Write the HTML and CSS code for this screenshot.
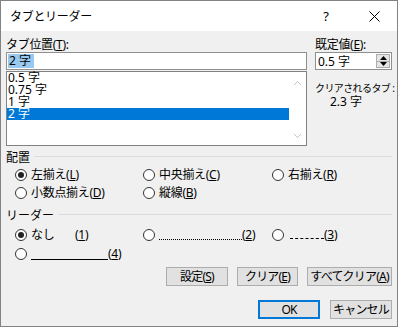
FILE: index.html
```html
<!DOCTYPE html>
<html lang="ja">
<head>
    <meta charset="UTF-8">
    <title>タブとリーダー</title>
    <link rel="stylesheet" href="styles.css">
</head>
<body>
    <div class="dialog">
        <div class="titlebar">
            <span class="title">タブとリーダー</span>
            <span class="tb-btn help">?</span>
            <span class="tb-btn close">
                <svg width="11" height="11" viewBox="0 0 11 11"><path d="M0.5 0.5 L10.5 10.5 M10.5 0.5 L0.5 10.5" stroke="#000" stroke-width="1" fill="none"/></svg>
            </span>
        </div>

        <div class="content">
            <div class="top">
                <div class="left">
                    <div class="label">タブ位置(<u>T</u>):</div>
                    <div class="field"><span class="field-sel">2 字</span></div>
                    <div class="listbox">
                        <ul class="items">
                            <li>0.5 字</li>
                            <li>0.75 字</li>
                            <li>1 字</li>
                            <li class="selected">2 字</li>
                        </ul>
                        <div class="scrollbar">
                            <svg width="9" height="6" viewBox="0 0 9 6"><path d="M1 5 L4.5 1.5 L8 5" stroke="#c2c2c2" fill="none"/></svg>
                            <svg width="9" height="6" viewBox="0 0 9 6"><path d="M1 1 L4.5 4.5 L8 1" stroke="#c2c2c2" fill="none"/></svg>
                        </div>
                    </div>
                </div>
                <div class="right">
                    <div class="label">既定値(<u>E</u>):</div>
                    <div class="spin">
                        <span>0.5 字</span>
                        <div class="spin-btns">
                            <span class="spin-up"><svg width="7" height="4" viewBox="0 0 7 4"><path d="M0 4 L3.5 0 L7 4 Z" fill="#000"/></svg></span>
                            <span class="spin-down"><svg width="7" height="4" viewBox="0 0 7 4"><path d="M0 0 L3.5 4 L7 0 Z" fill="#000"/></svg></span>
                        </div>
                    </div>
                    <div class="info cleared">クリアされるタブ :</div>
                    <div class="info value">2.3 字</div>
                </div>
            </div>

            <div class="group-title"><span>配置</span></div>
            <div class="options align">
                <label class="radio"><span class="dot checked"></span>左揃え(<u>L</u>)</label>
                <label class="radio"><span class="dot"></span>中央揃え(<u>C</u>)</label>
                <label class="radio"><span class="dot"></span>右揃え(<u>R</u>)</label>
                <label class="radio"><span class="dot"></span>小数点揃え(<u>D</u>)</label>
                <label class="radio"><span class="dot"></span>縦線(<u>B</u>)</label>
            </div>

            <div class="group-title leader-title"><span>リーダー</span></div>
            <div class="options leader">
                <label class="radio"><span class="dot checked"></span><span class="none">なし</span>(<u>1</u>)</label>
                <label class="radio"><span class="dot"></span><span class="dots"></span>(<u>2</u>)</label>
                <label class="radio"><span class="dot"></span><span class="dashes"></span>(<u>3</u>)</label>
                <label class="radio"><span class="dot"></span><span class="solid"></span>(<u>4</u>)</label>
            </div>

            <div class="buttons">
                <button class="btn w62">設定(<u>S</u>)</button>
                <button class="btn w61">クリア(<u>E</u>)</button>
                <button class="btn w85">すべてクリア(<u>A</u>)</button>
            </div>
            <div class="buttons footer">
                <button class="btn w62 default">OK</button>
                <button class="btn w62">キャンセル</button>
            </div>
        </div>
    </div>
</body>
</html>
```

FILE: styles.css
```css
body {
    margin: 0;
    padding: 0;
    font-family: "Noto Sans", "Noto Sans CJK JP", sans-serif;
    font-size: 12px;
    color: #000;
}

.dialog {
    width: 398px;
    height: 327px;
    box-sizing: border-box;
    border: 1px solid #838383;
    background-color: #f0f0f0;
    display: flex;
    flex-direction: column;
}

u {
    text-decoration: underline;
    text-underline-offset: 1px;
}

/* title bar */

.titlebar {
    height: 30px;
    background-color: #fff;
    display: flex;
    align-items: center;
    padding-left: 9px;
}

.title {
    flex: 1;
    font-size: 12px;
    letter-spacing: -0.3px;
}

.tb-btn {
    width: 46px;
    height: 30px;
    display: flex;
    align-items: center;
    justify-content: center;
}

.help {
    font-size: 13px;
    margin-right: 2px;
}

.close svg {
    display: block;
}

/* content */

.content {
    padding: 7px 5px 0 5px;
}

.top {
    display: flex;
    gap: 8px;
    height: 113px;
}

.left {
    width: 301px;
}

.right {
    width: 77px;
}

.label {
    height: 14px;
    line-height: 14px;
    letter-spacing: -0.3px;
}

.field {
    height: 18px;
    box-sizing: border-box;
    border: 1px solid #8f8f8f;
    background-color: #fff;
    padding: 1px 1px;
    line-height: 14px;
}

.field-sel {
    display: inline-block;
    background-color: #99c9ef;
    padding: 0 3px 0 1px;
}

.listbox {
    margin-top: 1px;
    height: 75px;
    box-sizing: border-box;
    border: 1px solid #828282;
    background-color: #fff;
    display: flex;
}

.items {
    list-style: none;
    margin: 0;
    padding: 0;
    flex: 1;
}

.items li {
    height: 12px;
    line-height: 12px;
    padding-left: 1px;
}

.items li.selected {
    background-color: #0078d7;
    color: #fff;
}

.scrollbar {
    width: 17px;
    display: flex;
    flex-direction: column;
    justify-content: space-between;
    align-items: center;
    padding: 8px 0 6px 0;
}

.scrollbar svg {
    display: block;
}

.spin {
    height: 18px;
    box-sizing: border-box;
    border: 1px solid #8f8f8f;
    background-color: #fff;
    display: flex;
    align-items: center;
    padding-left: 2px;
}

.spin span {
    flex: 1;
}

.spin-btns {
    width: 14px;
    height: 14px;
    margin-right: 1px;
    display: flex;
    flex-direction: column;
    border: 1px solid #adadad;
    box-sizing: border-box;
}

.spin-btns span {
    flex: 1;
    display: flex;
    align-items: center;
    justify-content: center;
    background-color: #e5e5e5;
}

.spin-up {
    border-bottom: 1px solid #adadad;
}

.spin-btns svg {
    display: block;
}

.info {
    height: 13px;
    line-height: 13px;
    font-size: 10px;
    letter-spacing: -0.6px;
    white-space: nowrap;
}

.info.cleared {
    margin-top: 12px;
}

.info.value {
    padding-left: 15px;
    font-size: 12px;
    letter-spacing: 0;
}

/* groups */

.group-title {
    display: flex;
    align-items: center;
    height: 14px;
    line-height: 14px;
}

.group-title::after {
    content: "";
    flex: 1;
    border-top: 1px solid #dcdcdc;
    margin-left: 4px;
    margin-top: -3px;
}

.options {
    display: grid;
    grid-template-columns: 128px 129px 1fr;
    padding-left: 9px;
}

.align {
    margin-top: 3px;
    row-gap: 4px;
}

.leader-title {
    margin-top: 9px;
}

.leader {
    margin-top: 5px;
    row-gap: 5px;
}

.radio {
    display: flex;
    align-items: center;
    height: 14px;
    line-height: 14px;
    white-space: nowrap;
    letter-spacing: -0.3px;
}

.dot {
    width: 12px;
    height: 12px;
    box-sizing: border-box;
    border: 1px solid #333;
    border-radius: 50%;
    background-color: #fff;
    margin-right: 4px;
    display: flex;
    align-items: center;
    justify-content: center;
}

.dot.checked::after {
    content: "";
    width: 6px;
    height: 6px;
    border-radius: 50%;
    background-color: #222;
}

.none {
    width: 44px;
}

.dots {
    width: 83px;
    height: 9px;
    border-bottom: 1px dotted #000;
}

.dashes {
    width: 34px;
    height: 7px;
    border-bottom: 1px dashed #000;
    margin-left: 2px;
}

.solid {
    width: 77px;
    height: 10px;
    border-bottom: 1px solid #000;
}

/* buttons */

.buttons {
    display: flex;
    justify-content: flex-end;
    gap: 9px;
    margin-top: 6px;
}

.footer {
    margin-top: 14px;
    gap: 10px;
}

.btn {
    height: 19px;
    box-sizing: border-box;
    border: 1px solid #adadad;
    background-color: #e1e1e1;
    font-family: inherit;
    font-size: 12px;
    letter-spacing: -0.8px;
    color: #000;
    padding: 0;
    line-height: 15px;
    white-space: nowrap;
}

.btn.default {
    border: 2px solid #0078d7;
}

.w62 {
    width: 62px;
}

.w61 {
    width: 61px;
}

.w85 {
    width: 85px;
}
```
